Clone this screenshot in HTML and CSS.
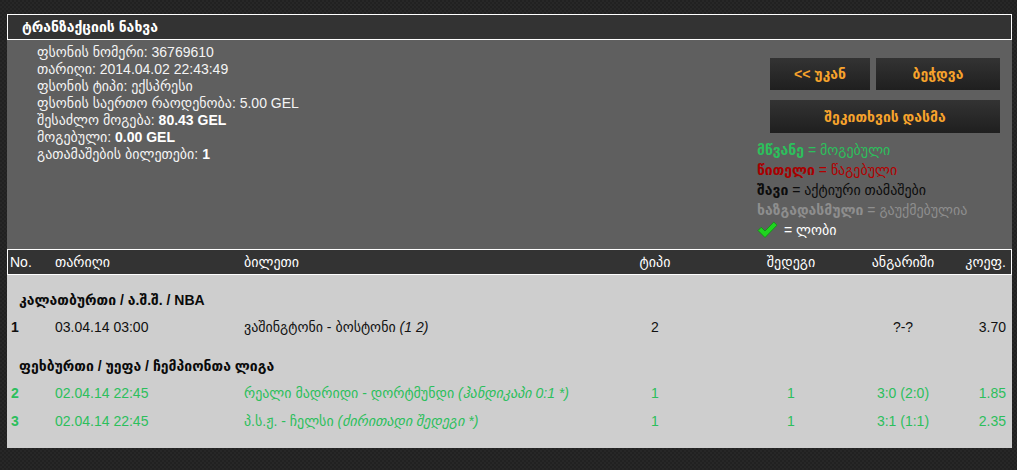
FILE: index.html
```html
<!DOCTYPE html>
<html lang="ka">
<head>
<meta charset="utf-8">
<title>ტრანზაქციის ნახვა</title>
<link rel="stylesheet" href="styles.css">
</head>
<body>
<div class="wrap">
  <div class="title">ტრანზაქციის ნახვა</div>
  <div class="panel">
    <div class="info">
      <div>ფსონის ნომერი: 36769610</div>
      <div>თარიღი: 2014.04.02 22:43:49</div>
      <div>ფსონის ტიპი: ექსპრესი</div>
      <div>ფსონის საერთო რაოდენობა: 5.00 GEL</div>
      <div>შესაძლო მოგება: <b>80.43 GEL</b></div>
      <div>მოგებული: <b>0.00 GEL</b></div>
      <div>გათამაშების ბილეთები: <b>1</b></div>
    </div>
    <div class="side">
      <div class="btns">
        <div class="btn-row">
          <a class="btn btn-back">&lt;&lt; უკან</a>
          <a class="btn btn-print">ბეჭდვა</a>
        </div>
        <a class="btn btn-wide">შეკითხვის დასმა</a>
      </div>
      <div class="legend">
        <div class="lg green"><b>მწვანე</b> = მოგებული</div>
        <div class="lg red"><b>წითელი</b> = წაგებული</div>
        <div class="lg black"><b>შავი</b> = აქტიური თამაშები</div>
        <div class="lg gray"><b>ხაზგადასმული</b> = გაუქმებულია</div>
        <div class="lg white">
          <svg class="check" width="21" height="18" viewBox="0 0 21 18"><path d="M1 9.5 L4.2 6.3 L8 10 L16.8 1 L20 4.2 L8 16.5 Z" fill="#1fd41f" stroke="#0d8f12" stroke-width="0.8" stroke-linejoin="round"/></svg>
          <span>= ლობი</span>
        </div>
      </div>
    </div>
  </div>
  <div class="thead grid">
    <div class="c1">No.</div>
    <div class="c2">თარიღი</div>
    <div class="c3">ბილეთი</div>
    <div class="c4">ტიპი</div>
    <div class="c5">შედეგი</div>
    <div class="c6">ანგარიში</div>
    <div class="c7">კოეფ.</div>
  </div>
  <div class="tbody">
    <div class="group">კალათბურთი / ა.შ.შ. / NBA</div>
    <div class="row grid">
      <div class="c1 num">1</div>
      <div class="c2">03.04.14 03:00</div>
      <div class="c3">ვაშინგტონი - ბოსტონი <i>(1 2)</i></div>
      <div class="c4">2</div>
      <div class="c5"></div>
      <div class="c6">?-?</div>
      <div class="c7">3.70</div>
    </div>
    <div class="group g2">ფეხბურთი / უეფა / ჩემპიონთა ლიგა</div>
    <div class="row grid won">
      <div class="c1 num">2</div>
      <div class="c2">02.04.14 22:45</div>
      <div class="c3">რეალი მადრიდი - დორტმუნდი <i>(ჰანდიკაპი 0:1 *)</i></div>
      <div class="c4">1</div>
      <div class="c5">1</div>
      <div class="c6">3:0 (2:0)</div>
      <div class="c7">1.85</div>
    </div>
    <div class="row grid won">
      <div class="c1 num">3</div>
      <div class="c2">02.04.14 22:45</div>
      <div class="c3">პ.ს.ჟ. - ჩელსი <i>(ძირითადი შედეგი *)</i></div>
      <div class="c4">1</div>
      <div class="c5">1</div>
      <div class="c6">3:1 (1:1)</div>
      <div class="c7">2.35</div>
    </div>
  </div>
</div>
</body>
</html>
```

FILE: styles.css
```css
html, body {
  margin: 0;
  padding: 0;
}
body {
  background-color: #242424;
  background-image: repeating-conic-gradient(#272727 0 25%, #212121 0 50%);
  background-size: 4px 4px;
  font-family: "Liberation Sans", "DejaVu Sans", sans-serif;
  font-size: 14px;
  color: #fff;
  height: 470px;
  overflow: hidden;
}
.wrap {
  width: 1005px;
  margin: 14px 0 0 7px;
}
.title {
  border: 1px solid #fff;
  background: #333;
  height: 24px;
  line-height: 24px;
  padding-left: 14px;
  font-weight: bold;
  font-size: 14px;
  color: #fff;
}
.panel {
  background: #5f5f5f;
  height: 209px;
  display: flex;
  justify-content: space-between;
}
.info {
  padding: 4px 0 0 30px;
  line-height: 17px;
  color: #f4f4f4;
}
.info b { color: #fff; }
.side {
  width: 243px;
  margin-right: 12px;
  display: flex;
  flex-direction: column;
}
.btns {
  display: flex;
  flex-direction: column;
  align-items: flex-end;
  gap: 10px;
  padding-top: 18px;
}
.btn-row {
  display: flex;
  gap: 6px;
}
.btn {
  display: flex;
  align-items: center;
  justify-content: center;
  height: 32px;
  background: linear-gradient(#333333, #1f1f1f);
  color: #f7a32c;
  font-weight: bold;
  font-size: 14px;
  box-sizing: border-box;
}
.btn-back { width: 100px; }
.btn-print { width: 124px; }
.btn-wide { width: 230px; height: 33px; }
.legend {
  margin-top: 7px;
  line-height: 20px;
  font-size: 14px;
}
.lg { height: 20px; white-space: nowrap; }
.green { color: #2cc05c; }
.red { color: #b30000; }
.red b { color: #a80000; }
.black { color: #0c0c0c; }
.gray { color: #8e8e8e; }
.white {
  color: #fff;
  display: flex;
  align-items: center;
  gap: 6px;
}
.check { display: block; }
.grid {
  display: grid;
  grid-template-columns: 47px 189px 354px 114px 158px 66px 70px;
  padding-right: 5px;
  white-space: nowrap;
}
.thead {
  border: 1px solid #fff;
  background: #333;
  height: 24px;
  line-height: 24px;
  font-size: 14px;
  color: #fff;
}
.thead .c1 { padding-left: 2px; }
.c4, .c5, .c6 { text-align: center; }
.c7 { text-align: right; }
.tbody {
  background: #cecece;
  color: #111;
  padding: 12px 0 12px 1px;
  height: 173px;
  box-sizing: border-box;
}
.group {
  height: 26px;
  line-height: 26px;
  font-weight: bold;
  padding-left: 11px;
  color: #0a0a0a;
}
.g2 { margin-top: 12px; }
.row {
  height: 28px;
  line-height: 28px;
}
.row .c1 { padding-left: 3px; }
.num { font-weight: bold; }
.won { color: #2cbf5c; }
```
